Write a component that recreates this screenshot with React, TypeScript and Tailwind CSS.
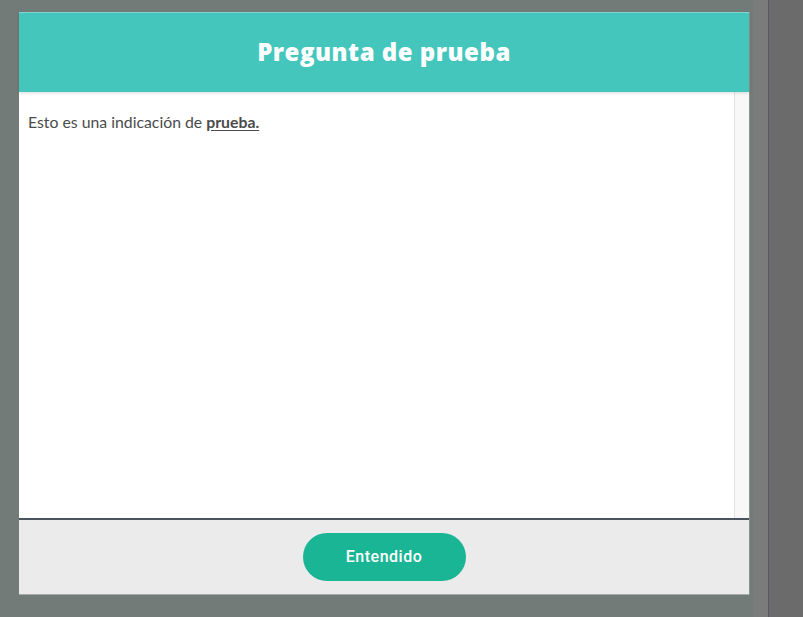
import React from "react";

export default function App() {
  return (
    <div className="w-[803px] h-[617px] bg-[#737b79] flex overflow-hidden">
      <div className="w-[753px] pl-[19px] pt-[12px]">
        <div className="w-[731px] flex flex-col border-r border-[#8c9290]">
          <div className="h-[80px] bg-[#45c6bc] border-t border-[#7fd6cf] flex items-center justify-center shadow-[0_1px_3px_rgba(0,0,0,0.15)] relative z-10">
            <h1
              className="text-white text-[24px] font-extrabold tracking-[0.5px] mt-[-1px]"
              style={{ fontFamily: "'Open Sans', sans-serif" }}
            >
              Pregunta de prueba
            </h1>
          </div>
          <div className="h-[426px] bg-white flex">
            <div className="flex-1 pl-[9px] pt-[20px]">
              <p
                className="text-[15.8px] leading-[20px] text-[#4b4b4b]"
                style={{ fontFamily: "Lato, sans-serif" }}
              >
                Esto es una indicación de{" "}
                <span className="font-bold underline underline-offset-2">prueba.</span>
              </p>
            </div>
            <div className="w-[15px] bg-[#f8f8f8] border-l border-[#e3e3e3]" />
          </div>
          <div className="h-[2px] bg-[#4a525e]" />
          <div className="h-[75px] bg-[#ebebeb] border-b border-[#a7aaa9] flex items-start justify-center pt-[13px]">
            <button
              className="w-[163px] h-[48px] rounded-full bg-[#1ab594] text-white text-[16px] font-medium tracking-[0.5px]"
              style={{ fontFamily: "Roboto, Arial, sans-serif" }}
            >
              Entendido
            </button>
          </div>
        </div>
      </div>
      <div className="w-[15px] h-full bg-[#7b7b7b]" />
      <div className="w-[1px] h-full bg-[#555a62]" />
      <div className="flex-1 h-full bg-[#6b6b6b]" />
    </div>
  );
}
